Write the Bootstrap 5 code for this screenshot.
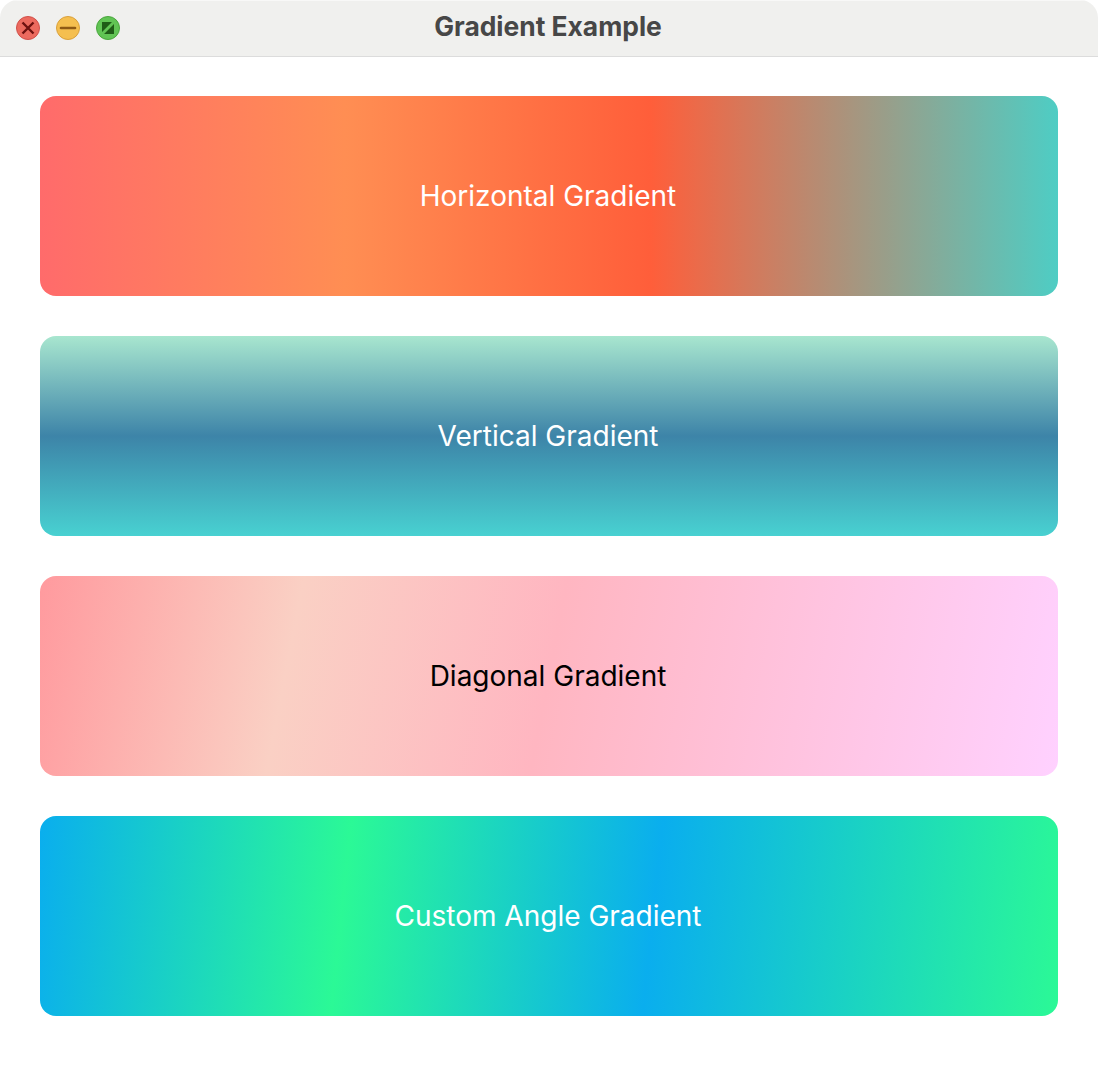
<!DOCTYPE html>
<html lang="en">
<head>
    <meta charset="UTF-8">
    <title>Gradient Example</title>
    <link href="https://cdn.jsdelivr.net/npm/bootstrap@5.3.3/dist/css/bootstrap.min.css" rel="stylesheet">
    <script src="https://cdn.jsdelivr.net/npm/bootstrap@5.3.3/dist/js/bootstrap.bundle.min.js"></script>
    <style>
        body {
            font-family: Inter, "Liberation Sans", sans-serif;
            background: #fff;
        }
        .app-window {
            height: 1072px;
            background: #fff;
            border-radius: 18px 18px 0 0;
            overflow: hidden;
        }
        .title-bar {
            height: 57px;
            background: #f0f0ee;
            border-top: 1px solid #f8f8f7;
            border-bottom: 1px solid #dcdcdc;
        }
        .title-text {
            font-size: 26.4px;
            font-weight: 700;
            color: #474747;
            line-height: 1;
            margin-bottom: 4px;
            margin-right: 2px;
        }
        .lights {
            left: 16px;
            top: 15px;
            gap: 16px;
        }
        .light {
            width: 24px;
            height: 24px;
            display: block;
        }
        .grad-list {
            padding: 39px 40px 0;
            gap: 40px;
        }
        .grad-box {
            height: 200px;
            border-radius: 16px;
            font-size: 28px;
        }
        .grad-h { background: linear-gradient(90deg, #ff6b6b 0%, #ff8e53 30%, #ff5e3a 60%, #4ecdc4 100%); }
        .grad-v { background: linear-gradient(180deg, #a8e6cf 0%, #3d84a8 50%, #48d1d1 100%); }
        .grad-d { background: linear-gradient(101deg, #ff9a9e 0%, #fad0c4 25%, #ffb6c1 50%, #ffd1ff 100%); }
        .grad-c { background: linear-gradient(96deg, #0aaeee 0%, #2bf996 30%, #0aaeee 60%, #2bf996 100%); }
        .grad-label {
            line-height: 1;
            margin-right: 2px;
        }
    </style>
</head>
<body>
    <div class="app-window d-flex flex-column">
        <div class="title-bar position-relative d-flex align-items-center justify-content-center">
            <div class="lights position-absolute d-flex">
                <svg class="light" viewBox="0 0 24 24"><circle cx="12" cy="12" r="11.5" fill="#ec6a5e" stroke="#d0504a"/><path d="M6.5 6.5l11 11M17.5 6.5l-11 11" stroke="#6e1210" stroke-width="2.4"/></svg>
                <svg class="light" viewBox="0 0 24 24"><circle cx="12" cy="12" r="11.5" fill="#f5bf4f" stroke="#d9a03c"/><path d="M5 12h14" stroke="#8f5a14" stroke-width="2.6" stroke-linecap="round"/></svg>
                <svg class="light" viewBox="0 0 24 24"><circle cx="12" cy="12" r="11.5" fill="#61c454" stroke="#4aa63d"/><path d="M6 6h10L6 16zM18 18H8L18 8z" fill="#1f5c17"/></svg>
            </div>
            <span class="title-text">Gradient Example</span>
        </div>
        <div class="grad-list d-flex flex-column">
            <div class="grad-box grad-h d-flex align-items-center justify-content-center text-white"><span class="grad-label">Horizontal Gradient</span></div>
            <div class="grad-box grad-v d-flex align-items-center justify-content-center text-white"><span class="grad-label">Vertical Gradient</span></div>
            <div class="grad-box grad-d d-flex align-items-center justify-content-center text-black"><span class="grad-label">Diagonal Gradient</span></div>
            <div class="grad-box grad-c d-flex align-items-center justify-content-center text-white"><span class="grad-label">Custom Angle Gradient</span></div>
        </div>
    </div>
</body>
</html>
